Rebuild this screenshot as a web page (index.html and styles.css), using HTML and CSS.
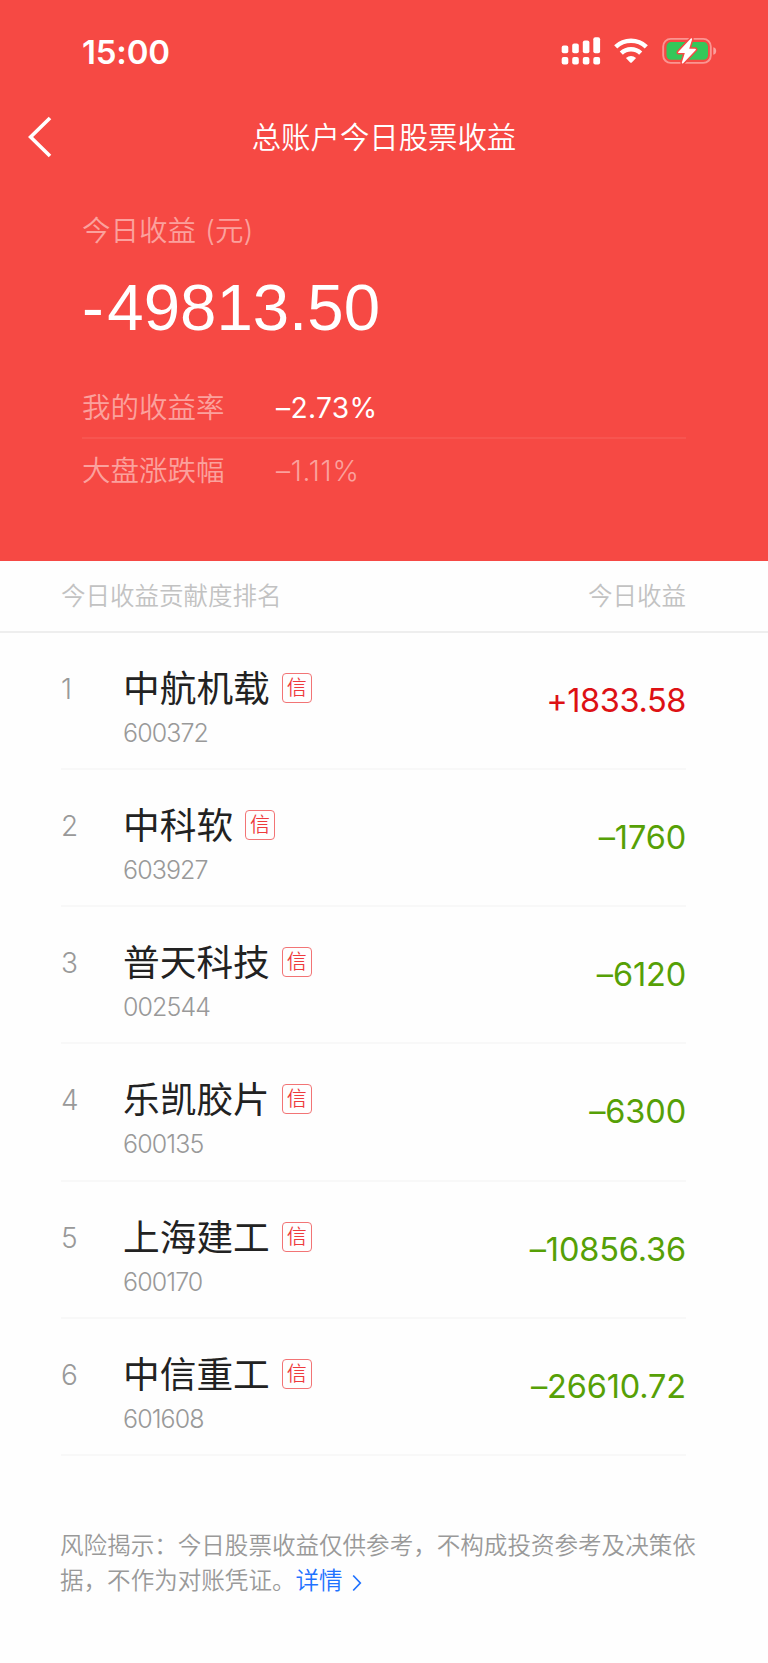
FILE: index.html
```html
<!DOCTYPE html>
<html lang="zh-CN">
<head>
<meta charset="utf-8">
<title>总账户今日股票收益</title>
<link rel="stylesheet" href="styles.css">
</head>
<body>
<header class="hero">
  <div class="status">
    <span class="clock">15:00</span>
    <svg class="status-icons" width="156" height="30" viewBox="0 0 156 30">
      <g fill="#fff">
        <rect x="0.7" y="8.5" width="6.6" height="7.8" rx="2"/><rect x="11.2" y="6.5" width="6.6" height="9.8" rx="2"/><rect x="21.8" y="3.5" width="6.6" height="12.8" rx="2"/><rect x="32.3" y="0.3" width="6.8" height="16" rx="2"/>
        <rect x="0.7" y="20" width="6.6" height="7.4" rx="2"/><rect x="11.2" y="20" width="6.6" height="7.4" rx="2"/><rect x="21.8" y="20" width="6.6" height="7.4" rx="2"/><rect x="32.3" y="20" width="6.8" height="7.4" rx="2"/>
      </g>
      <g fill="none" stroke="#fff" stroke-width="4.5">
        <path d="M54.7 9.8A22.3 22.3 0 0 1 85.3 9.8"/>
        <path d="M60.3 16.2A14 14 0 0 1 79.7 16.2"/>
      </g>
      <path d="M64.9 21Q70 16.8 75.1 21L70.8 25.4Q70 26.2 69.2 25.4Z" fill="#fff"/>
      <rect x="102.2" y="1.9" width="47.6" height="24" rx="7.5" fill="none" stroke="#fff" stroke-opacity=".42" stroke-width="1.9"/>
      <path d="M152.3 10.2Q155.2 11 155.2 14T152.3 17.8Z" fill="#fff" fill-opacity=".48"/>
      <rect x="105.5" y="5.1" width="41.5" height="17.6" rx="4.5" fill="#34c759"/>
      <path d="M129.8 1.5L117.2 14.9Q116.6 15.9 117.8 16H123.8L120.8 25.8Q121 27.1 122.2 26.3L134.8 12.9Q135.4 11.9 134.2 11.7H128.2L131.2 2Q131 .7 129.8 1.5Z" fill="#fff" stroke="#f64944" stroke-width="3" paint-order="stroke"/>
    </svg>
  </div>
  <nav class="nav">
    <svg class="back" width="26" height="42" viewBox="0 0 26 42"><path d="M23 2L3.6 21L23 40" fill="none" stroke="#fff" stroke-width="3.6"/></svg>
    <h1 class="title">总账户今日股票收益</h1>
  </nav>
  <p class="label total-label">今日收益 (元)</p>
  <p class="total"><span class="minus">-</span>49813.50</p>
  <div class="rate"><span class="label">我的收益率</span><span class="rate-value">–2.73%</span></div>
  <div class="rate market"><span class="label">大盘涨跌幅</span><span class="rate-value">–1.11%</span></div>
</header>
<main>
  <div class="list-head"><span>今日收益贡献度排名</span><span>今日收益</span></div>
  <ol class="list">
    <li class="row"><span class="rank">1</span><div class="stock"><div class="name">中航机载<i class="tag">信</i></div><div class="code">600372</div></div><span class="amount up">+1833.58</span></li>
    <li class="row"><span class="rank">2</span><div class="stock"><div class="name">中科软<i class="tag">信</i></div><div class="code">603927</div></div><span class="amount">–1760</span></li>
    <li class="row"><span class="rank">3</span><div class="stock"><div class="name">普天科技<i class="tag">信</i></div><div class="code">002544</div></div><span class="amount">–6120</span></li>
    <li class="row"><span class="rank">4</span><div class="stock"><div class="name">乐凯胶片<i class="tag">信</i></div><div class="code">600135</div></div><span class="amount">–6300</span></li>
    <li class="row"><span class="rank">5</span><div class="stock"><div class="name">上海建工<i class="tag">信</i></div><div class="code">600170</div></div><span class="amount">–10856.36</span></li>
    <li class="row"><span class="rank">6</span><div class="stock"><div class="name">中信重工<i class="tag">信</i></div><div class="code">601608</div></div><span class="amount">–26610.72</span></li>
  </ol>
  <p class="notice">风险揭示：今日股票收益仅供参考，不构成投资参考及决策依<br>据，不作为对账凭证。<a class="more">详情<svg class="chevron" width="10" height="18" viewBox="0 0 10 18"><path d="M1.2 1.5L8.3 9L1.2 16.5" fill="none" stroke="#1f72ff" stroke-width="1.7"/></svg></a></p>
</main>
</body>
</html>
```
FILE: styles.css
```css
* { box-sizing: border-box; margin: 0; padding: 0; }
body {
  width: 768px;
  min-height: 1663px;
  background: #fefefe;
  font-family: Inter, "Noto Sans CJK SC", sans-serif;
  font-weight: 350;
  font-feature-settings: "calt" 0;
}
.hero { height: 561px; background: #f64944; color: #fff; padding: 0 82px; }
.status { height: 96px; padding-top: 37px; display: flex; justify-content: space-between; margin-right: -30.5px; }
.clock { font-size: 33px; font-weight: 600; line-height: 30px; letter-spacing: -0.2px; }
.status-icons { display: block; }
.nav { height: 82px; display: flex; align-items: center; margin: 0 -82px; padding: 0 27px; }
.back { flex: none; }
.title { flex: 1; margin: 1px 26px 0 0; text-align: center; font-size: 29.4px; font-weight: 350; line-height: 40px; }
.label { color: #fba19d; font-size: 28.5px; line-height: 40px; }
.total-label { margin-top: 33px; word-spacing: 1px; }
.total { font-family: "Liberation Sans", Arial, sans-serif; font-size: 65.4px; line-height: 76px; margin-top: 19px; font-weight: 400; }
.minus { letter-spacing: 3.5px; }
.rate { display: flex; align-items: center; height: 62px; }
.total + .rate { margin-top: 32px; height: 61px; padding-top: 1px; border-bottom: 2px solid #f75550; }
.rate .label { width: 194px; }
.market { padding-top: 1px; }
.rate-value { font-size: 28.2px; line-height: 40px; font-weight: 400; letter-spacing: 0.3px; }
.market .rate-value { color: #fba19d; letter-spacing: 0.7px; font-weight: 350; }
.list-head { height: 72px; padding: 0 82px 3px 61px; display: flex; justify-content: space-between; align-items: center; border-bottom: 2px solid #eee; color: #c2c2c2; font-size: 24.5px; }
.list { list-style: none; padding: 0 82px 0 61px; }
.row { display: flex; align-items: flex-start; height: 137.15px; border-bottom: 2px solid #f8f8f8; }
.rank { width: 62px; padding-top: 36px; font-size: 28px; line-height: 40px; color: #999; }
.stock { flex: 1; padding-top: 31px; }
.name { display: flex; align-items: center; font-size: 36.7px; line-height: 50px; color: #222; font-weight: 400; }
.tag { width: 30px; height: 30px; margin: -2px 0 0 12px; border: 1.5px solid #f27475; border-radius: 4px; color: #ee3a3c; font-size: 20px; line-height: 29px; text-align: center; font-style: normal; font-weight: 350; }
.code { margin-top: 3px; font-size: 25px; line-height: 33px; letter-spacing: -0.9px; color: #999; }
.amount { padding-top: 46px; font-size: 32.5px; line-height: 44px; letter-spacing: -0.15px; font-weight: 400; color: #56a006; }
.up { color: #dd1114; letter-spacing: -0.4px; }
.notice { padding: 72px 60px 0; font-size: 23.55px; line-height: 35.5px; color: #999; white-space: nowrap; }
.more { color: #1f72ff; }
.chevron { margin-left: 9px; vertical-align: -3px; }
```
